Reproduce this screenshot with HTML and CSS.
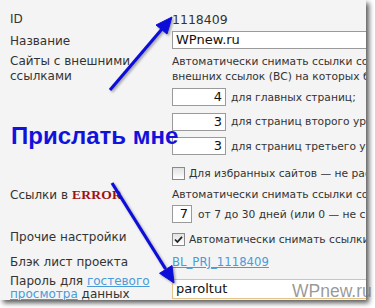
FILE: index.html
```html
<!DOCTYPE html>
<html lang="ru">
<head>
<meta charset="utf-8">
<link rel="stylesheet" href="styles.css">
</head>
<body>
<div class="page">
  <div class="shot">
    <div class="form">
      <div class="row r-id"><div class="lbl">ID</div><div class="val idv">1118409</div></div>
      <div class="row r-name"><div class="lbl">Название</div><div class="val"><span class="inp wide">WPnew.ru</span></div></div>
      <div class="row r-sites">
        <div class="lbl">Сайты с внешними<br>ссылками</div>
        <div class="val txt">Автоматически снимать ссылки со страниц с количеством<br>внешних ссылок (ВС) на которых больше чем</div>
      </div>
      <div class="row r-num"><div class="lbl"></div><div class="val"><span class="inp num">4</span><span class="after">для главных страниц;</span></div></div>
      <div class="row r-num"><div class="lbl"></div><div class="val"><span class="inp num">3</span><span class="after">для страниц второго уровня;</span></div></div>
      <div class="row r-num"><div class="lbl"></div><div class="val"><span class="inp num">3</span><span class="after">для страниц третьего уровня</span></div></div>
      <div class="row r-chk"><div class="lbl"></div><div class="val"><span class="cb"></span><span class="after">Для избранных сайтов — не распространять</span></div></div>
      <div class="row r-err">
        <div class="lbl">Ссылки в <b class="err">ERROR</b></div>
        <div class="val col">
          <div class="txt">Автоматически снимать ссылки со статусом ERROR через</div>
          <div class="sub"><span class="inp tiny">7</span><span class="after">от 7 до 30 дней (или 0 — не снимать)</span></div>
        </div>
      </div>
      <div class="row r-other"><div class="lbl">Прочие настройки</div><div class="val"><span class="cb on"><svg viewBox="0 0 13 13" width="13" height="13"><path d="M3 6.5 L5.4 9 L10 3.8" fill="none" stroke="#222" stroke-width="1.8"/></svg></span><span class="after">Автоматически снимать ссылки</span></div></div>
      <div class="row r-bl"><div class="lbl">Блэк лист проекта</div><div class="val txt"><a class="lnk bl" href="#">BL_PRJ_1118409</a></div></div>
      <div class="row r-pw">
        <div class="lbl pwl">Пароль для <a class="lnk" href="#">гостевого</a><br><a class="lnk" href="#">просмотра</a> данных</div>
        <div class="val"><span class="inp pw">paroltut</span></div>
      </div>
    </div>
  </div>
  <div class="wm">WPnew.ru</div>
  <div class="callout">Прислать мне</div>
  <svg class="arrows" width="375" height="308" viewBox="0 0 375 308">
    <defs>
      <filter id="sh" x="-20%" y="-20%" width="140%" height="140%">
        <feDropShadow dx="1.5" dy="1.5" stdDeviation="1" flood-color="#000" flood-opacity="0.35"/>
      </filter>
    </defs>
    <g filter="url(#sh)" fill="#1010d8" stroke="#1010d8">
      <line x1="110" y1="90" x2="162" y2="29" stroke-width="3.2"/>
      <polygon points="172,17 167,34 156,25" stroke-width="1"/>
      <line x1="112" y1="183" x2="165.6" y2="269" stroke-width="3.2"/>
      <polygon points="174,283 172,265.5 159.5,273.3" stroke-width="1"/>
    </g>
  </svg>
</div>
</body>
</html>
```
FILE: styles.css
```css
html, body {
  margin: 0;
  padding: 0;
  background: #ffffff;
}
.page {
  position: relative;
  width: 375px;
  height: 308px;
  overflow: hidden;
}
.shot {
  width: 366px;
  height: 300px;
  overflow: hidden;
  background: #f4f4f4;
  box-shadow: 3px 3px 5px rgba(0,0,0,0.65);
  font-family: "DejaVu Sans", Verdana, sans-serif;
  color: #333;
}
.form {
  padding: 12px 0 0 10px;
}
.row {
  display: flex;
  align-items: flex-start;
}
.lbl {
  width: 162px;
  flex: none;
  font-size: 12px;
  line-height: 15px;
  color: #333;
  white-space: nowrap;
}
.pwl {
  line-height: 12.5px;
}
.val {
  flex: none;
  display: flex;
  align-items: center;
  white-space: nowrap;
  font-size: 10.7px;
  line-height: 15px;
}
.val.col {
  flex-direction: column;
  align-items: flex-start;
}
.idv {
  font-size: 12.5px;
}
.r-id { height: 19px; }
.r-name { height: 23px; }
.r-name .lbl { padding-top: 3px; }
.r-sites { height: 34px; }
.r-num { height: 24.5px; }
.r-chk { height: 25px; }
.r-chk .val { padding-top: 4.5px; }
.r-err { height: 43.5px; }
.r-other { height: 25px; }
.r-other .val { padding-top: 2px; }
.r-bl { height: 20px; }
.inp {
  display: block;
  box-sizing: border-box;
  height: 18px;
  border: 1px solid #9a9a9a;
  background: #fff;
  line-height: 16px;
  color: #111;
  font-size: 13px;
  flex: none;
}
.wide {
  width: 200px;
  padding-left: 3px;
}
.num {
  width: 54px;
  text-align: right;
  padding-right: 3px;
}
.tiny {
  width: 20px;
  text-align: right;
  padding-right: 3px;
}
.after {
  margin-left: 5px;
}
.sub {
  margin-top: 3.5px;
  display: flex;
  align-items: center;
}
.sub .after { margin-left: 6px; }
.cb {
  display: block;
  box-sizing: border-box;
  width: 13px;
  height: 13px;
  border: 1px solid #8a8a8a;
  background: linear-gradient(#e2e2e2, #fff);
  position: relative;
  flex: none;
}
.cb svg {
  position: absolute;
  left: -1px;
  top: -1px;
}
.r-other .after, .r-chk .after { margin-left: 4px; }
.err {
  font-family: "Liberation Serif", serif;
  font-weight: bold;
  color: #a01010;
  font-size: 13.5px;
  letter-spacing: 0.3px;
}
.lnk {
  color: #4a9bd8;
  text-decoration: underline;
}
.bl {
  font-size: 11.7px;
}
.pw {
  width: 200px;
  height: 20px;
  margin-top: 4px;
  border: 1px solid #e2c48a;
  padding-left: 3px;
  line-height: 18px;
}
.wm {
  position: absolute;
  left: 292px;
  top: 281px;
  font-family: "Liberation Sans", Arial, sans-serif;
  font-size: 17.5px;
  color: rgba(120,120,120,0.75);
}
.callout {
  position: absolute;
  left: 11px;
  top: 122px;
  font-family: "Liberation Sans", Arial, sans-serif;
  font-weight: bold;
  font-size: 24px;
  color: #1212dc;
  white-space: nowrap;
}
.arrows {
  position: absolute;
  left: 0;
  top: 0;
  pointer-events: none;
}
```
